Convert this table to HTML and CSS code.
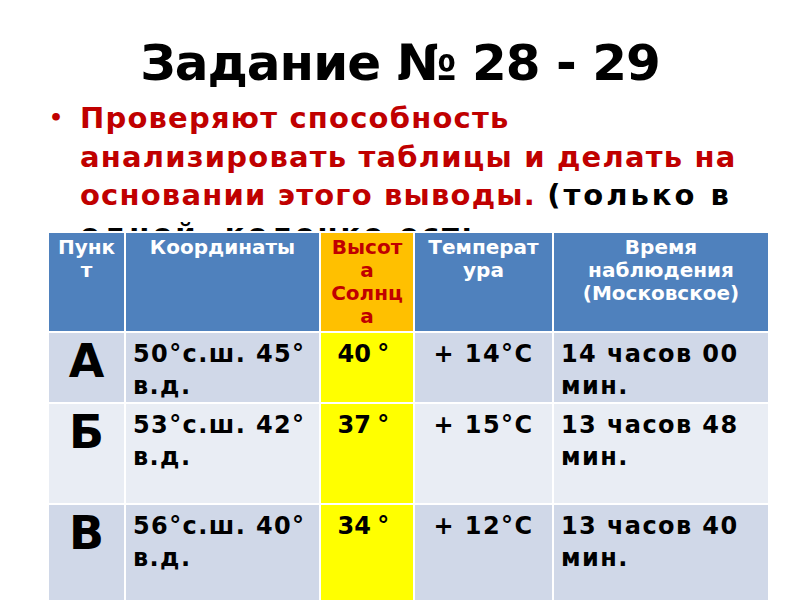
FILE: index.html
```html
<!DOCTYPE html>
<html lang="ru">
<head>
<meta charset="utf-8">
<title>Задание № 28 - 29</title>
<link rel="stylesheet" href="styles.css">
</head>
<body>
<div class="slide">
  <h1 class="title">Задание № 28 - 29</h1>
  <ul class="bullets">
    <li><span class="red">Проверяют способность анализировать таблицы и делать на основании этого выводы.</span> <span class="note">(только в одной&nbsp; колонке есть<br>ошибка)</span></li>
  </ul>
  <table class="data">
    <colgroup>
      <col class="c1"><col class="c2"><col class="c3"><col class="c4"><col class="c5">
    </colgroup>
    <thead>
      <tr>
        <th>Пунк<br>т</th>
        <th>Координаты</th>
        <th class="sun-h">Высот<br>а<br>Солнц<br>а</th>
        <th>Температ<br>ура</th>
        <th>Время наблюдения (Московское)</th>
      </tr>
    </thead>
    <tbody>
      <tr class="r1">
        <td class="pt">А</td>
        <td>50°с.ш. 45° в.д.</td>
        <td class="sun">40 °</td>
        <td class="tmp">+ 14°C</td>
        <td>14 часов 00 мин.</td>
      </tr>
      <tr class="r2">
        <td class="pt">Б</td>
        <td>53°с.ш. 42° в.д.</td>
        <td class="sun">37 °</td>
        <td class="tmp">+ 15°C</td>
        <td>13 часов 48 мин.</td>
      </tr>
      <tr class="r3">
        <td class="pt">В</td>
        <td>56°с.ш. 40° в.д.</td>
        <td class="sun">34 °</td>
        <td class="tmp">+ 12°C</td>
        <td>13 часов 40 мин.</td>
      </tr>
    </tbody>
  </table>
</div>
</body>
</html>
```
FILE: styles.css
```css
html, body {
  margin: 0;
  padding: 0;
  background: #ffffff;
}
.slide {
  width: 800px;
  height: 600px;
  overflow: hidden;
  background: #ffffff;
  font-family: "DejaVu Sans", sans-serif;
  font-weight: bold;
  color: #000000;
}
.title {
  margin: 0;
  padding-top: 32px;
  height: 62px;
  font-size: 50px;
  letter-spacing: -1px;
  line-height: 62px;
  text-align: center;
  font-weight: bold;
}
.bullets {
  margin: 0;
  padding: 5px 30px 0 80px;
  height: 132px;
  list-style: none;
  font-size: 29px;
  line-height: 38.5px;
  letter-spacing: 1.2px;
}
.bullets li {
  position: relative;
}
.bullets li::before {
  content: "•";
  position: absolute;
  left: -31px;
  top: 0;
  font-size: 22px;
  letter-spacing: 0;
  color: #c00000;
}
.red {
  color: #c00000;
}
.note {
  letter-spacing: 3px;
}
.data {
  position: relative;
  z-index: 1;
  margin-left: 47px;
  width: 721px;
  border-collapse: collapse;
  table-layout: fixed;
}
.c1 { width: 77px; }
.c2 { width: 195px; }
.c3 { width: 94px; }
.c4 { width: 139px; }
.c5 { width: 216px; }
.data th, .data td {
  border: 2px solid #ffffff;
  vertical-align: top;
}
.data th {
  background: #4f81bd;
  color: #ffffff;
  font-size: 20px;
  line-height: 23px;
  height: 95px;
  padding: 3px 4px 0;
  text-align: center;
}
.data th.sun-h {
  background: #ffc000;
  color: #c00000;
}
.data td {
  font-size: 24px;
  line-height: 32px;
  letter-spacing: 1.4px;
  padding: 5px 7px 0;
  text-align: left;
}
.data td.pt {
  font-size: 46px;
  line-height: 50px;
  letter-spacing: 0;
  padding-top: 3px;
  text-align: center;
}
.data td.sun,
.data td.tmp {
  text-align: center;
}
.data td.sun {
  letter-spacing: 0;
  word-spacing: -2px;
  padding-right: 14px;
}
.r1 td { background: #d0d8e8; height: 63px; }
.r2 td { background: #e9edf4; height: 94px; }
.r3 td { background: #d0d8e8; height: 94px; }
.data td.sun { background: #ffff00; }
```
